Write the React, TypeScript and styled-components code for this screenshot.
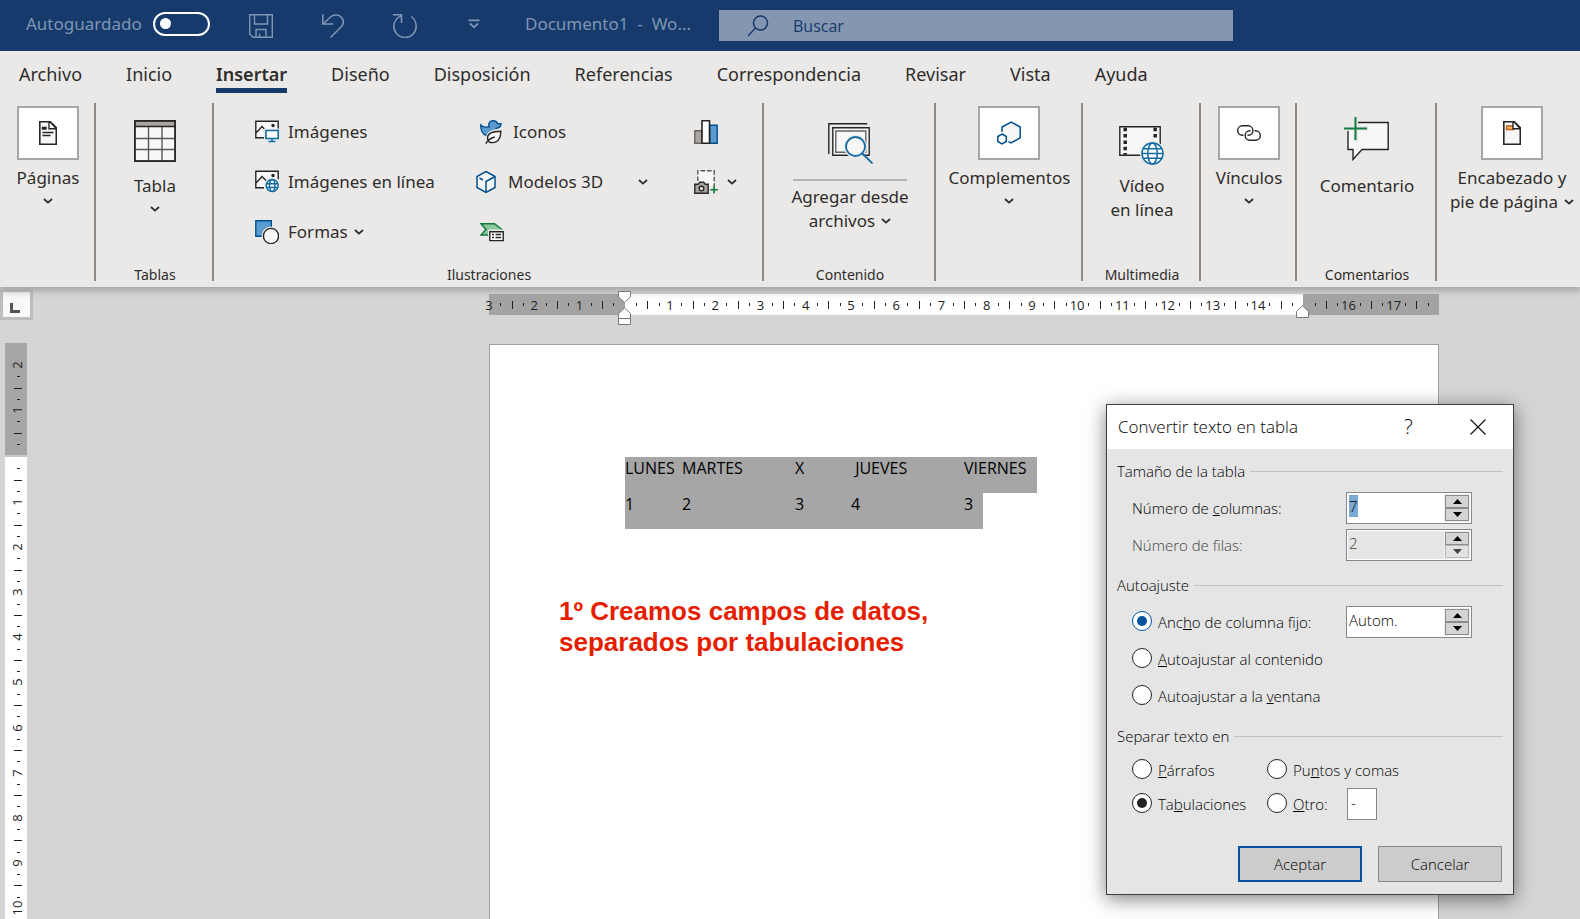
import React, { useState } from 'react';
import styled, { createGlobalStyle, css } from 'styled-components';

const ui = '"Noto Sans", "Open Sans", sans-serif';
const thin = '"Open Sans", "Noto Sans", sans-serif';

const GlobalStyle = createGlobalStyle`
  *, *::before, *::after { box-sizing: border-box; }
  body { margin: 0; font-family: ${ui}; color: #2f2d2b; overflow: hidden; }
  button, input { font: inherit; color: inherit; }
  button { padding: 0; border: 0; background: none; cursor: pointer; }
  svg { display: block; flex: none; }
`;

const Window = styled.div`
  display: flex;
  flex-direction: column;
  height: 100vh;
  overflow: hidden;
  background: #d5d5d5;
`;

/* ---------- title bar ---------- */

const TitleBar = styled.header`
  display: flex;
  align-items: center;
  flex: none;
  height: 51px;
  padding-left: 26px;
  background: #163a6c;
  color: #8095b2;
  font-size: 17px;
  line-height: 24px;
`;

const AutoSave = styled.label`
  display: flex;
  align-items: center;
  gap: 11px;
  width: 199px;
  padding-bottom: 4px;
`;

const Toggle = styled.input`
  appearance: none;
  display: flex;
  align-items: center;
  width: 57px;
  height: 24px;
  margin: 0;
  padding-left: 5px;
  border: 2px solid #fff;
  border-radius: 12px;
  &::before {
    content: '';
    width: 11px;
    height: 11px;
    border-radius: 50%;
    background: #fff;
  }
`;

const QuickButton = styled.button<{ $last?: boolean }>`
  display: flex;
  justify-content: center;
  width: ${p => (p.$last ? 66 : 72)}px;
`;

const DocTitle = styled.div`
  width: 212px;
  padding: 0 0 4px 18px;
  white-space: pre;
`;

const Search = styled.label`
  display: flex;
  align-items: center;
  gap: 24px;
  width: 514px;
  height: 31px;
  padding-left: 28px;
  background: #8496b0;
  color: #163a6c;
  input {
    flex: 1;
    min-width: 0;
    border: 0;
    padding: 0;
    background: none;
    font: 400 16px/24px ${thin};
    &::placeholder { color: #163a6c; opacity: 1; }
  }
`;

/* ---------- ribbon ---------- */

const Ribbon = styled.div`
  position: relative;
  z-index: 1;
  flex: none;
  background: #eae9e8;
  box-shadow: 0 2px 8px 1px #9c9b9a;
  clip-path: inset(0 0 -12px 0);
`;

const Tabs = styled.nav`
  display: flex;
  gap: 44px;
  padding: 10px 0 0 19px;
`;

const Tab = styled.a<{ $active?: boolean }>`
  height: 32px;
  border-bottom: 5px solid transparent;
  color: inherit;
  font-size: 18px;
  line-height: 26px;
  text-decoration: none;
  ${p => p.$active && css`
    border-bottom-color: #163a6c;
    font-weight: 600;
  `}
`;

const Groups = styled.div`
  display: grid;
  grid-template-columns: 96fr 118fr 550fr 172fr 147fr 118fr 96fr 140fr 143fr;
  padding: 10px 0 6px;
`;

const Group = styled.section`
  display: flex;
  flex-direction: column;
  align-items: center;
  min-width: 0;
  height: 178px;
  padding-left: 2px;
  border-right: 2px solid #8e8b86;
  &:last-child { border-right: 0; padding-left: 7px; }
`;

const GroupName = styled.h2`
  margin: auto 0 0;
  font-size: 14px;
  font-weight: 400;
  line-height: 12px;
`;

const BigButton = styled.button<{ $boxed?: boolean }>`
  display: flex;
  flex-direction: column;
  align-items: center;
  padding-top: ${p => (p.$boxed ? 3 : 5)}px;
  font-size: 17px;
  line-height: 24px;
  white-space: nowrap;
`;

const IconArea = styled.span<{ $boxed?: boolean; $rule?: boolean }>`
  display: flex;
  align-items: center;
  justify-content: center;
  width: 62px;
  height: 66px;
  ${p => p.$boxed && css`
    height: 54px;
    margin-bottom: 6px;
    border: 2px solid #a8a5a3;
    background: #fff;
  `}
  ${p => p.$rule && css`
    width: 114px;
    height: 73px;
    margin-bottom: 4px;
    border-bottom: 2px solid #b4b3b1;
  `}
`;

const Inline = styled.span`
  display: flex;
  align-items: center;
  gap: 6px;
`;

const ChevronRow = styled.span`
  display: flex;
  align-items: center;
  height: 21px;
`;

const Illustrations = styled.div`
  display: grid;
  grid-template-columns: 221px 214px 1fr;
  grid-auto-rows: 50px;
  align-self: stretch;
  align-items: center;
  padding: 4px 0 0 39px;
`;

const SmallButton = styled.button<{ $indent?: boolean; $wide?: boolean }>`
  display: flex;
  align-items: center;
  gap: 9px;
  padding-left: ${p => (p.$indent ? 4 : 0)}px;
  font-size: 17px;
  line-height: 24px;
  white-space: nowrap;
  ${p => p.$wide && css`
    width: 172px;
    gap: 12px;
    svg:last-child { margin-left: auto; }
  `}
`;

/* ---------- workspace ---------- */

const Workspace = styled.main`
  position: relative;
  display: grid;
  grid-template-columns: 27px 1fr 950px 141px;
  flex: 1;
  min-height: 0;
  overflow: hidden;
`;

const LeftRail = styled.div`
  display: flex;
  flex-direction: column;
  align-items: flex-start;
  min-height: 0;
`;

const TabStop = styled.button`
  display: flex;
  align-items: center;
  justify-content: center;
  flex: none;
  width: 33px;
  height: 31px;
  margin: 2px 0 23px;
  padding: 6px 3px 0 0;
  border: 3px solid #bdbdbd;
  background: #f9f9f9;
`;

const VRuler = styled.div`
  width: 22px;
  margin-left: 5px;
  color: #222;
  font: 400 13px/20px ${thin};
`;

const VTop = styled.div`
  display: flex;
  flex-direction: column;
  justify-content: flex-end;
  height: 115px;
  padding-bottom: 3px;
  overflow: hidden;
  background: #a6a6a6;
`;

const VBody = styled.div`
  display: grid;
  grid-auto-rows: 1fr;
  height: 498px;
  margin-top: -3px;
  border-top: 2px solid #c8c8c8;
  background: #fff;
`;

const VCell = styled.div`
  position: relative;
  display: grid;
  grid-template-rows: repeat(4, 1fr);
  min-height: 45px;
  &::before { content: ''; }
`;

const VNumber = styled.span`
  position: absolute;
  top: -10px;
  left: 2px;
  width: 20px;
  height: 20px;
  text-align: center;
  transform: rotate(-90deg);
`;

const VTick = styled.i<{ $long?: boolean }>`
  width: ${p => (p.$long ? 8 : 3)}px;
  height: 1px;
  margin-left: ${p => (p.$long ? 9 : 12)}px;
  background: #222;
`;

const PageColumn = styled.div`
  grid-column: 3;
  display: flex;
  flex-direction: column;
  min-height: 0;
`;

const HRuler = styled.div`
  position: relative;
  display: grid;
  grid-template-columns: repeat(21, 1fr);
  flex: none;
  height: 21px;
  margin: 7px 0 29px;
  color: #222;
  font: 400 13px/20px ${thin};
`;

const HCell = styled.div<{ $margin?: boolean }>`
  position: relative;
  display: grid;
  grid-template-columns: repeat(4, 1fr);
  align-items: center;
  background: ${p => (p.$margin ? '#a3a3a3' : '#fff')};
  &::before { content: ''; }
`;

const HNumber = styled.span`
  position: absolute;
  left: -12px;
  z-index: 1;
  width: 24px;
  text-align: center;
`;

const HTick = styled.i<{ $long?: boolean }>`
  width: 1px;
  height: ${p => (p.$long ? 8 : 3)}px;
  background: #222;
`;

const IndentMark = styled.span<{ $cm: number; $low?: boolean }>`
  position: absolute;
  z-index: 2;
  top: ${p => (p.$low ? 11 : -3)}px;
  left: calc(100% * ${p => p.$cm} / 21 - 7px);
`;

const Page = styled.article`
  flex: 1;
  padding: 112px 69px 0;
  border: 1px solid #a0a0a0;
  border-bottom: 0;
  background: #fff;
`;

const Selection = styled.div`
  display: flex;
  flex-direction: column;
  align-items: flex-start;
  margin-left: 66px;
  color: #000;
  font: 16px/22px ${thin};
`;

const SelectedLine = styled.p<{ $width: number }>`
  display: grid;
  grid-template-columns: 57px 113px 56px 113px 1fr;
  width: ${p => p.$width}px;
  height: 36px;
  margin: 0;
  background: #a6a6a6;
  white-space: pre;
`;

const Note = styled.p`
  margin: 67px 0 0;
  color: #e61e00;
  font: bold 26px/31px "Liberation Sans", Arial, sans-serif;
`;

/* ---------- dialog ---------- */

const Dialog = styled.form`
  position: absolute;
  top: 117px;
  right: 66px;
  width: 408px;
  border: 1px solid #404040;
  background: #e5e5e5;
  box-shadow: 0 4px 18px rgba(0, 0, 0, 0.5);
  color: #000;
  font: 300 15px/22px ${thin};
`;

const DialogTitle = styled.div`
  display: flex;
  align-items: center;
  height: 44px;
  padding: 0 26px 0 11px;
  background: #fff;
  font-size: 17px;
  h1 { margin: 0 auto 0 0; font: inherit; }
`;

const TitleButton = styled.button`
  width: 17px;
  margin-left: 53px;
  font-size: 20px;
`;

const DialogBody = styled.div`
  padding: 11px 10px 12px;
`;

const Section = styled.fieldset<{ $tight?: boolean }>`
  display: flex;
  flex-direction: column;
  gap: ${p => (p.$tight ? 2 : 5)}px;
  min-width: 0;
  margin: 0 0 ${p => (p.$tight ? 26 : 13)}px;
  padding: 0;
  border: 0;
`;

const Legend = styled.legend<{ $tight?: boolean }>`
  display: flex;
  align-items: center;
  gap: 5px;
  width: 100%;
  padding: 0;
  margin-bottom: ${p => (p.$tight ? 7 : 10)}px;
  &::after {
    content: '';
    flex: 1;
    height: 1px;
    background: #c2c2c2;
  }
`;

const Row = styled.div<{ $dim?: boolean }>`
  display: flex;
  align-items: center;
  height: 32px;
  padding: 0 31px 0 15px;
  color: ${p => (p.$dim ? '#444' : '#000')};
  > :last-child:not(:first-child) { margin-left: auto; }
`;

const Pair = styled.div`
  display: grid;
  grid-template-columns: 135px 80px 30px;
  align-items: center;
  height: 32px;
  padding-left: 15px;
  white-space: nowrap;
`;

const Choice = styled.label`
  display: flex;
  align-items: center;
  gap: 6px;
`;

const Radio = styled.input<{ $blue?: boolean }>`
  appearance: none;
  display: grid;
  place-items: center;
  flex: none;
  width: 20px;
  height: 20px;
  margin: 0 0 2px;
  border: 1px solid #222;
  border-radius: 50%;
  background: #fff;
  &:checked { border-color: ${p => (p.$blue ? '#00549e' : '#222')}; }
  &:checked::before {
    content: '';
    width: 10px;
    height: 10px;
    border-radius: 50%;
    background: ${p => (p.$blue ? '#00549e' : '#222')};
  }
`;

const Spinner = styled.span<{ $dim?: boolean }>`
  display: flex;
  width: 126px;
  height: 32px;
  padding: 1px;
  border: 1px solid #85878d;
  background: #fff;
  input {
    flex: 1;
    min-width: 0;
    padding: 0 0 4px 1px;
    border: 0;
    background: ${p => (p.$dim ? '#e5e5e5' : '#fff')};
    outline: 0;
    &::selection { background: #7aa9d4; color: #000; }
  }
`;

const Steps = styled.span`
  display: grid;
  grid-template-rows: 1fr 1fr;
  width: 26px;
  padding: 1px;
  background: #f0f0f0;
`;

const Step = styled.button`
  display: grid;
  place-items: center;
  border: 1px solid #8c8c8c;
  background: #d4d4d4;
  color: #000;
  &:disabled { border-color: #b8b8b8; background: #e2e2e2; color: #444; }
`;

const OtherBox = styled.input`
  width: 30px;
  height: 32px;
  padding: 0 0 4px 3px;
  border: 1px solid #85878d;
  background: #fff;
`;

const Actions = styled.div`
  display: flex;
  justify-content: flex-end;
  gap: 16px;
  padding-right: 1px;
`;

const Action = styled.button<{ $primary?: boolean }>`
  width: 124px;
  height: 36px;
  border: ${p => (p.$primary ? '2px solid #00549e' : '1px solid #85878d')};
  background: #ccc;
`;

/* ---------- icons ---------- */

const Chevron = () => (
  <svg width="10" height="6" viewBox="0 0 10 6" fill="none" stroke="#2f2d2b" strokeWidth="1.8"><path d="M1 1l4 3.6L9 1" /></svg>
);

const Icon = ({ w = 24, h = 24, children }: { w?: number; h?: number; children: React.ReactNode }) => (
  <svg width={w} height={h} viewBox={`0 0 ${w} ${h}`} fill="none" stroke="#262524" strokeWidth="1.4">{children}</svg>
);

const SaveIcon = () => (
  <Icon><g stroke="#8095b2"><path d="M.7.7h22.6v22.6H4L.7 20zM5.5.7V10h13V.7M7 23.3v-7.8h10v7.8M10.5 23v-3.5" /></g></Icon>
);
const UndoIcon = () => (
  <Icon w={22}><g stroke="#8095b2" strokeWidth="1.5"><path d="M.8 0v10h10.500M1 10l7.500-7C12-.3 17.500.5 20 4c2 3 1.500 6.500-1 9L8.500 23.500" /></g></Icon>
);
const RedoIcon = () => (
  <Icon><g stroke="#8095b2" strokeWidth="1.5"><path d="M0 .8h8.500V9M8 2C4 3.500.8 7.500.8 12.300a11.200 11.200 0 0 0 22.400 0c0-4-1.700-7.500-5-9.800" /></g></Icon>
);
const MoreIcon = () => (
  <Icon w={12} h={14}><g stroke="#8095b2" strokeWidth="1.8"><path d="M.5 1.300h11M2 4.500l4 3.800 4-3.800" /></g></Icon>
);
const SearchIcon = () => (
  <Icon w={22} h={22}><g stroke="#163a6c" strokeWidth="1.5"><circle cx="13.5" cy="8" r="7" /><path d="M8.500 13L1 21" /></g></Icon>
);

const PageIcon = () => (
  <Icon w={18}><path d="M.8.800h10.500l6 6v16.400H.8z" fill="#f7f7f7" strokeWidth="1.6" /><path d="M10 .8v6.900h7.300L11 .8z" fill="#fff" /><path d="M3.500 6.500h3.500v1.500H3.500zM3.500 11.500h11M3.500 14.500h8" /></Icon>
);
const HeaderIcon = () => (
  <Icon w={18}><path d="M.8.800h10.500l6 6v16.400H.8z" fill="#f7f7f7" strokeWidth="1.6" /><path d="M3.500 5h7v3.500h-7z" fill="#f8c27a" stroke="#c55a11" /><path d="M10 .8v6.900h7.300L11 .8z" fill="#fff" /></Icon>
);
const TableIcon = () => (
  <Icon w={42} h={42}>
    <path d="M1 1h40v40H1z" fill="#f7f7f7" />
    <path d="M1 1h40v5.500H1z" fill="#a8a5a3" />
    <path d="M1 18.500h40M1 29.500h40M14.500 7v34M28 7v34" stroke="#5a5754" />
    <path d="M.8.800h40.400v40.400H.8z" />
  </Icon>
);
const Picture = () => (
  <><path d="M1 2h22v16H1z" fill="#f7f7f7" stroke="none" /><path d="M9 17.800H.8V1.200h22.400v8M1 13l6-6.500 5 5" /><circle cx="18" cy="5.500" r="1" fill="#262524" /></>
);
const Globe = ({ x, y, r }: { x: number; y: number; r: number }) => (
  <g transform={`translate(${x} ${y})`}>
    <circle r={r + 2} fill="#eae9e8" stroke="none" />
    <g stroke="#106ba3" strokeWidth="1.5" fill="none">
      <circle r={r} fill="#fff" />
      <ellipse rx={r * 0.45} ry={r} />
      <path d={r > 8
        ? `M${-r} 0H${r}M${-r * 0.88} ${-r * 0.45}H${r * 0.88}M${-r * 0.88} ${r * 0.45}H${r * 0.88}`
        : `M${-r * 0.92} ${-r * 0.3}H${r * 0.92}M${-r * 0.92} ${r * 0.35}H${r * 0.92}`} />
    </g>
  </g>
);
const ImageIcon = () => (
  <Icon><Picture /><path d="M9 8.500h15V22H9z" fill="#eae9e8" stroke="none" /><g stroke="#106ba3" strokeWidth="1.6"><path d="M11 10.500h12.200v8H11z" fill="#fff" /><path d="M17 18.500v3M13.500 21.500h7" /></g></Icon>
);
const OnlineImageIcon = () => (
  <Icon><Picture /><Globe x={17.2} y={15.5} r={6} /></Icon>
);
const ShapesIcon = () => (
  <Icon><path d="M.8.800h15.500v15.500H.8z" fill="#5b9bcf" stroke="#00508f" /><circle cx="16" cy="16" r="9.5" fill="#eae9e8" stroke="none" /><circle cx="16" cy="16" r="7.6" fill="#f7f7f7" /></Icon>
);
const IconsIcon = () => (
  <Icon>
    <path d="M.8 5c2 2.500 5 2.500 8.400 1.700C8 3 10 .8 13 .8c2.500 0 4 1.200 4.400 2.700l3.600.2c0 2.300-1.500 4-4 4.300-.8.300-1 1-1.300 2L6.500 15.500C2.500 14.500.5 10 .8 5z" fill="#5b9bcf" stroke="#00508f" />
    <path d="M21 11.300c-8 .3-12.600 1.700-12.600 7 0 2 .6 3.200 1.800 3.900 6.800 1.800 10.800-2.500 10.800-10.900z" fill="#eae9e8" stroke="#eae9e8" strokeWidth="5" />
    <path d="M20.800 11.300c-9.500 0-13.300 2.500-13.300 7 0 1.700.8 3.200 1.900 3.900 7.400 1.800 11.400-2.500 11.400-10.900zM5.800 23.700c2-3.700 5-5.700 9-6.700" fill="#f7f7f7" />
  </Icon>
);
const CubeIcon = () => (
  <Icon w={20}><g stroke="#00508f" strokeWidth="1.5"><path d="M10 1.500l9 5v11l-9 5-9-5v-11z" fill="#f7f7f7" /><path d="M3.500 8L7 10M10 22.500v-11l9-5" /></g></Icon>
);
const SmartArtIcon = () => (
  <Icon><path d="M1 3.800h13.500L22 9.500v3L9 12v3H1l5-5.500z" fill="#8cc79b" stroke="#107c41" /><path d="M8 9.500h16v12H8z" fill="#eae9e8" stroke="none" /><path d="M9.800 11.800h13.400v8.800H9.800z" fill="#fff" /><path d="M12 14.500h2M15.500 14.500H21M12 17.500h2M15.500 17.500H21" /></Icon>
);
const ChartIcon = () => (
  <Icon><path d="M.8 10.800h7v12.400h-7z" fill="#a8a5a3" stroke="#666361" /><path d="M15.800 5.200h7.400v18h-7.400z" fill="#5b9bcf" stroke="#00508f" /><path d="M8 .8h7.500v22.400H8z" fill="#fff" strokeWidth="1.6" /></Icon>
);
const ScreenshotIcon = () => (
  <Icon><path d="M4 1h16v15H4z" fill="#f7f7f7" stroke="none" /><path d="M3.800 11V.8h16.400V16" stroke="#5a5754" strokeDasharray="4.5 2" /><path d="M.8 14.300h3.400l1.500-2h4l1.500 2h3v8.900H.8z" fill="#a8a5a3" /><circle cx="7.5" cy="18.5" r="2.3" fill="#fff" /><path d="M20 16v7.500M16.300 19.700h7.500" stroke="#107c41" strokeWidth="1.6" /></Icon>
);
const ContentIcon = () => (
  <Icon w={45} h={41}><path d="M.8 31V.8h38.500" /><path d="M4.800 4.800h36.400v27.400H4.800z" fill="#f7f7f7" /><path d="M7.800 8h30v21.300h-30z" stroke="#666361" /><circle cx="27.5" cy="23.5" r="11.5" fill="#eae9e8" stroke="none" /><g stroke="#106ba3" strokeWidth="1.8"><circle cx="27.5" cy="23.5" r="9.5" fill="#f7f7f7" /><path d="M34.500 30.500L44.500 40.500" /></g></Icon>
);
const AddinsIcon = () => (
  <Icon><g stroke="#00508f" strokeWidth="1.5"><path d="M5 11V6l9.200-5L23.200 6v10.800L14 22l-2.500-1.400" fill="#f7f7f7" /><path d="M5 13l4.300 2.500v5L5 23 .8 20.500v-5z" fill="#fff" /></g></Icon>
);
const VideoIcon = () => (
  <Icon w={45} h={48}>
    <g transform="translate(0 9)">
      <path d="M.8.800h40.400v28.400H.8z" fill="#f7f7f7" />
      <path d="M6.200 1.800v27M36.200 1.800v12" strokeWidth="3.5" strokeDasharray="3.5 2.8" />
      <Globe x={33.5} y={27.5} r={10.5} />
    </g>
  </Icon>
);
const LinkIcon = () => (
  <Icon><path d="M6.500 14.200H5.400a4.700 4.700 0 0 1 0-9.400h5.800a4.700 4.700 0 0 1 0 9.400h-.7M17.500 9.800h1.100a4.700 4.700 0 0 1 0 9.400h-5.800a4.700 4.700 0 0 1 0-9.400h.7" /></Icon>
);
const CommentIcon = () => (
  <Icon w={46} h={48}>
    <path d="M4 5.500h40.200v27H18L9 42.500v-10H4z" fill="#f7f7f7" />
    <path d="M0 0h14v14H0z" fill="#eae9e8" stroke="none" />
    <path d="M11.500 0v24.500M0 11.500h24.500" stroke="#eae9e8" strokeWidth="5" />
    <path d="M11.500 0v23M0 11.500h23" stroke="#107c41" strokeWidth="2" />
  </Icon>
);
const Triangle = ({ down }: { down?: boolean }) => (
  <svg width="9" height="5" viewBox="0 0 9 5" fill="currentColor"><path d={down ? 'M0 0h9L4.500 5z' : 'M0 5h9L4.500 0z'} /></svg>
);

/* ---------- parts ---------- */

type BigProps = { icon: React.ReactNode; lines: string[]; boxed?: boolean; rule?: boolean; menu?: 'below' | 'inline' };

const Big = ({ icon, lines, boxed, rule, menu }: BigProps) => (
  <BigButton type="button" $boxed={boxed}>
    <IconArea $boxed={boxed} $rule={rule}>{icon}</IconArea>
    {lines.map((line, i) => (
      <Inline key={line}>{line}{menu === 'inline' && i === lines.length - 1 && <Chevron />}</Inline>
    ))}
    {menu === 'below' && <ChevronRow><Chevron /></ChevronRow>}
  </BigButton>
);

const tabs = ['Archivo', 'Inicio', 'Insertar', 'Diseño', 'Disposición', 'Referencias', 'Correspondencia', 'Revisar', 'Vista', 'Ayuda'];
const hMarks = ['3', '2', '1', '', '1', '2', '3', '4', '5', '6', '7', '8', '9', '10', '11', '12', '13', '14', '', '16', '17'];
const vMarks = ['', '1', '2', '3', '4', '5', '6', '7', '8', '9', '10'];

const VMark = ({ n }: { n: string }) => (
  <VCell><VNumber>{n}</VNumber><VTick /><VTick $long /><VTick /></VCell>
);

type FieldProps = { id: string; value: string; label?: string; disabled?: boolean; selected?: boolean };

const NumberField = ({ id, value, label, disabled, selected }: FieldProps) => {
  const [text, setText] = useState(value);
  return (
    <Spinner $dim={disabled}>
      <input
        id={id}
        aria-label={label}
        value={text}
        disabled={disabled}
        autoFocus={selected}
        onFocus={e => selected && e.currentTarget.select()}
        onChange={e => setText(e.target.value)}
      />
      <Steps>
        <Step type="button" aria-label="Aumentar"><Triangle /></Step>
        <Step type="button" aria-label="Disminuir" disabled={disabled}><Triangle down /></Step>
      </Steps>
    </Spinner>
  );
};

export default function App() {
  const [fit, setFit] = useState('fixed');
  const [sep, setSep] = useState('tab');
  const fitRadio = (v: string) => ({ type: 'radio', name: 'fit', checked: fit === v, onChange: () => setFit(v) });
  const sepRadio = (v: string) => ({ type: 'radio', name: 'sep', checked: sep === v, onChange: () => setSep(v) });

  return (
    <Window>
      <GlobalStyle />
      <TitleBar>
        <AutoSave>Autoguardado<Toggle type="checkbox" role="switch" /></AutoSave>
        <QuickButton aria-label="Guardar"><SaveIcon /></QuickButton>
        <QuickButton aria-label="Deshacer"><UndoIcon /></QuickButton>
        <QuickButton aria-label="Rehacer"><RedoIcon /></QuickButton>
        <QuickButton $last aria-label="Personalizar"><MoreIcon /></QuickButton>
        <DocTitle>Documento1  -  Wo...</DocTitle>
        <Search><SearchIcon /><input placeholder="Buscar" aria-label="Buscar" /></Search>
      </TitleBar>

      <Ribbon>
        <Tabs>
          {tabs.map(t => <Tab key={t} href="#" $active={t === 'Insertar'}>{t}</Tab>)}
        </Tabs>
        <Groups>
          <Group><Big boxed icon={<PageIcon />} lines={['Páginas']} menu="below" /></Group>
          <Group>
            <Big icon={<TableIcon />} lines={['Tabla']} menu="below" />
            <GroupName>Tablas</GroupName>
          </Group>
          <Group>
            <Illustrations>
              <SmallButton><ImageIcon />Imágenes</SmallButton>
              <SmallButton $indent><IconsIcon />Iconos</SmallButton>
              <SmallButton $indent aria-label="Gráfico"><ChartIcon /></SmallButton>
              <SmallButton><OnlineImageIcon />Imágenes en línea</SmallButton>
              <SmallButton $wide><CubeIcon />Modelos 3D<Chevron /></SmallButton>
              <SmallButton $indent aria-label="Captura"><ScreenshotIcon /><Chevron /></SmallButton>
              <SmallButton><ShapesIcon /><Inline>Formas<Chevron /></Inline></SmallButton>
              <SmallButton $indent aria-label="SmartArt"><SmartArtIcon /></SmallButton>
            </Illustrations>
            <GroupName>Ilustraciones</GroupName>
          </Group>
          <Group>
            <Big rule icon={<ContentIcon />} lines={['Agregar desde', 'archivos']} menu="inline" />
            <GroupName>Contenido</GroupName>
          </Group>
          <Group><Big boxed icon={<AddinsIcon />} lines={['Complementos']} menu="below" /></Group>
          <Group>
            <Big icon={<VideoIcon />} lines={['Vídeo', 'en línea']} />
            <GroupName>Multimedia</GroupName>
          </Group>
          <Group><Big boxed icon={<LinkIcon />} lines={['Vínculos']} menu="below" /></Group>
          <Group>
            <Big icon={<CommentIcon />} lines={['Comentario']} />
            <GroupName>Comentarios</GroupName>
          </Group>
          <Group><Big boxed icon={<HeaderIcon />} lines={['Encabezado y', 'pie de página']} menu="inline" /></Group>
        </Groups>
      </Ribbon>

      <Workspace>
        <LeftRail>
          <TabStop aria-label="Tabulación izquierda">
            <svg width="10" height="10" viewBox="0 0 10 10"><path d="M1.500 0v8.500H10" fill="none" stroke="#555" strokeWidth="3" /></svg>
          </TabStop>
          <VRuler>
            <VTop><VMark n="2" /><VMark n="1" /></VTop>
            <VBody>{vMarks.map((n, i) => <VMark key={i} n={n} />)}</VBody>
          </VRuler>
        </LeftRail>

        <PageColumn>
          <HRuler>
            {hMarks.map((n, i) => (
              <HCell key={i} $margin={i < 3 || i > 17}>
                <HNumber>{n}</HNumber><HTick /><HTick $long /><HTick />
              </HCell>
            ))}
            <IndentMark $cm={3}>
              <svg width="13" height="34" viewBox="0 0 13 34" fill="#fff" stroke="#777"><path d="M.5.500h12V6l-6 5.500L.5 6zM6.500 17l6 5.500v5H.5v-5zM.5 27.500h12v6H.5z" /></svg>
            </IndentMark>
            <IndentMark $cm={18} $low>
              <svg width="13" height="13" viewBox="0 0 13 13" fill="#fff" stroke="#777"><path d="M6.500.700l6 5.800v6H.5v-6z" /></svg>
            </IndentMark>
          </HRuler>
          <Page>
            <Selection>
              <SelectedLine $width={412}>
                <span>LUNES</span><span>MARTES</span><span>X</span><span> JUEVES</span><span>VIERNES</span>
              </SelectedLine>
              <SelectedLine $width={358}>
                <span>1</span><span>2</span><span>3</span><span>4</span><span>3</span>
              </SelectedLine>
            </Selection>
            <Note>1º Creamos campos de datos,<br />separados por tabulaciones</Note>
          </Page>
        </PageColumn>

        <Dialog onSubmit={e => e.preventDefault()}>
          <DialogTitle>
            <h1>Convertir texto en tabla</h1>
            <TitleButton type="button">?</TitleButton>
            <TitleButton type="button" aria-label="Cerrar">
              <svg width="16" height="16" viewBox="0 0 16 16" stroke="#111" strokeWidth="1.2"><path d="M.5.500l15 15M15.500.500l-15 15" /></svg>
            </TitleButton>
          </DialogTitle>
          <DialogBody>
            <Section>
              <Legend>Tamaño de la tabla</Legend>
              <Row><label htmlFor="cols">Número de <u>c</u>olumnas:</label><NumberField id="cols" value="7" selected /></Row>
              <Row $dim><label htmlFor="rows">Número de filas:</label><NumberField id="rows" value="2" disabled /></Row>
            </Section>
            <Section>
              <Legend>Autoajuste</Legend>
              <Row>
                <Choice><Radio $blue {...fitRadio('fixed')} /><span>Anc<u>h</u>o de columna fijo:</span></Choice>
                <NumberField id="width" label="Ancho" value="Autom." />
              </Row>
              <Row><Choice><Radio $blue {...fitRadio('content')} /><span><u>A</u>utoajustar al contenido</span></Choice></Row>
              <Row><Choice><Radio $blue {...fitRadio('window')} /><span>Autoajustar a la <u>v</u>entana</span></Choice></Row>
            </Section>
            <Section $tight>
              <Legend $tight>Separar texto en</Legend>
              <Pair>
                <Choice><Radio {...sepRadio('par')} /><span><u>P</u>árrafos</span></Choice>
                <Choice><Radio {...sepRadio('semi')} /><span>Pu<u>n</u>tos y comas</span></Choice>
              </Pair>
              <Pair>
                <Choice><Radio {...sepRadio('tab')} /><span>Ta<u>b</u>ulaciones</span></Choice>
                <Choice><Radio {...sepRadio('other')} /><span><u>O</u>tro:</span></Choice>
                <OtherBox defaultValue="-" aria-label="Otro separador" />
              </Pair>
            </Section>
            <Actions>
              <Action $primary type="submit">Aceptar</Action>
              <Action type="button">Cancelar</Action>
            </Actions>
          </DialogBody>
        </Dialog>
      </Workspace>
    </Window>
  );
}
